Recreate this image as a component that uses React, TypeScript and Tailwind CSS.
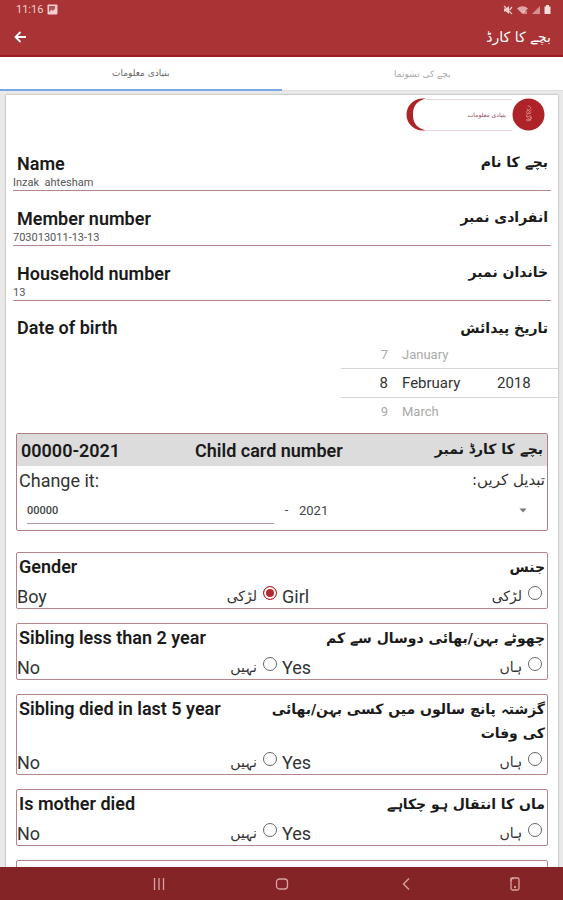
import { useState } from 'react';

const URDU = "font-['DejaVu_Sans',sans-serif]";

function StatusBar() {
  return (
    <div className="flex h-[19px] items-center justify-between pr-3 pl-4 text-[#f3cfcf]">
      <div className="flex items-center gap-1">
        <span className="text-[11px] leading-4">11:16</span>
        <svg width="11" height="11" viewBox="0 0 11 11" aria-hidden="true">
          <rect x="0.5" y="0.5" width="10" height="10" rx="1" fill="currentColor" />
          <path d="M2 8.5 4.5 5.5 6 7l2-2.5V2H2z" fill="#a93335" opacity="0.8" />
        </svg>
      </div>
      <div className="flex items-center gap-1">
        <svg width="10" height="10" viewBox="0 0 10 10" aria-hidden="true">
          <path d="M1 3.5h2L6 1v8L3 6.5H1z" fill="currentColor" />
          <path d="M1 1l8 8M9 2 6.500 5" stroke="currentColor" strokeWidth="1.2" />
        </svg>
        <svg width="11" height="10" viewBox="0 0 11 10" aria-hidden="true">
          <path d="M0 3.500a8 8 0 0 1 11 0L5.500 9z" fill="currentColor" opacity="0.75" />
          <path d="M7 6v3M9 6v3" stroke="#f7dede" />
        </svg>
        <svg width="8" height="9" viewBox="0 0 8 9" aria-hidden="true">
          <path d="M0 9 8 1v8z" fill="currentColor" opacity="0.6" />
        </svg>
        <svg width="7" height="9" viewBox="0 0 7 9" aria-hidden="true">
          <path d="M2 0h3v1.500h1.500V9h-6V1.500H2z" fill="#f7dede" />
        </svg>
      </div>
    </div>
  );
}

function AppBar() {
  return (
    <div className="flex h-9 items-center justify-between pr-3 pl-3">
      <button type="button" aria-label="Back" className="p-0.5 text-white">
        <svg width="12" height="12" viewBox="0 0 12 12" fill="none" stroke="currentColor" strokeWidth="1.800">
          <path d="M12 6H1.500M6.500 1l-5 5 5 5" />
        </svg>
      </button>
      <h1 dir="rtl" className={`${URDU} text-[14px] leading-6 text-white`}>بچے کا کارڈ</h1>
    </div>
  );
}

function Tabs() {
  return (
    <div role="tablist" className={`${URDU} flex h-[34px] shrink-0 bg-white text-[9px]`}>
      <button type="button" role="tab" aria-selected="true" dir="rtl"
        className="flex-1 border-b-2 border-[#78a9e0] pt-0.5 text-[#666]">
        بنیادی معلومات
      </button>
      <button type="button" role="tab" aria-selected="false" dir="rtl"
        className="flex-1 border-b border-[#ddd] pt-0.5 text-[#aaa]">
        بچے کی نشونما
      </button>
    </div>
  );
}

function SectionBadge() {
  return (
    <div className="mr-[13px] ml-auto flex h-[33px] w-[139px] items-center justify-end">
      <svg className="h-[33px] w-5 shrink-0" viewBox="0 0 20 33" aria-hidden="true">
        <path d="M20 0.500h-3.500a16 16 0 0 0 0 32H20C9 30 7 23 7 16.500S9 3 20 0.500z" fill="#ad2327" />
      </svg>
      <div className="flex h-8 flex-1 items-center justify-end border-y border-[#ecd3d4] pr-1.5">
        <span dir="rtl" className={`${URDU} text-[6px] text-[#8f4b58]`}>بنیادی معلومات</span>
      </div>
      <svg className="size-[33px] shrink-0" viewBox="0 0 33 33" fill="none" aria-hidden="true">
        <circle cx="16.500" cy="16.500" r="16" fill="#ad2327" />
        <g stroke="#d98585" strokeWidth="0.900" strokeLinecap="round">
          <path d="M16 8c2 0 3 1 2.500 2.500S15 12 14.500 14s3 2 4.500 1M19.500 12c-1 2-5 3-5 5s4 1 4.500 3-3 2-4.500 1.500M17.500 17c1.500 1 2.500 2.500 1.500 4s-3 2.500-4.500 1.500M15 11l3 3M14.500 18.500l4 4" />
        </g>
      </svg>
    </div>
  );
}

function Field({ id, label, urdu, defaultValue }: { id: string; label: string; urdu: string; defaultValue: string }) {
  return (
    <div className="px-[7px] pt-4">
      <div className="flex h-6 items-center justify-between pr-[3px] pb-0.5 pl-1">
        <label htmlFor={id} className="text-[18px] font-semibold">{label}</label>
        <span dir="rtl" className={`${URDU} pb-0.5 text-[14px] font-bold`}>{urdu}</span>
      </div>
      <input id={id} defaultValue={defaultValue}
        className="block h-[15px] w-full border-b border-[#b5858b] text-[11px] text-[#555] outline-none" />
    </div>
  );
}

function DatePicker() {
  const row = 'grid h-7 grid-cols-[47px_1fr_61px] items-center gap-[14px]';
  return (
    <div role="group" aria-labelledby="dob" className="ml-auto w-[217px]">
      <div className={`${row} pt-0.5 text-[13px] text-[#aaa]`}>
        <button type="button" className="text-right">7</button>
        <button type="button" className="text-left">January</button>
      </div>
      <div className="grid h-[30px] grid-cols-[47px_1fr_61px] items-center gap-[14px] border-y border-[#d6d6d6] text-[15px] text-[#333]">
        <span className="text-right">8</span>
        <span>February</span>
        <span>2018</span>
      </div>
      <div className={`${row} text-[13px] text-[#aaa]`}>
        <button type="button" className="text-right">9</button>
        <button type="button" className="text-left">March</button>
      </div>
    </div>
  );
}

function CardNumber() {
  return (
    <section className="mx-[10px] mt-[7px] rounded-xs border border-[#b07f84]">
      <div className="grid h-8 grid-cols-3 items-center bg-[#dcdcdc] px-1 text-[18px] font-semibold">
        <span>00000-2021</span>
        <h2 className="whitespace-nowrap">Child card number</h2>
        <span dir="rtl" className={`${URDU} pb-0.5 text-[14px] font-bold`}>بچے کا کارڈ نمبر</span>
      </div>
      <div className="flex h-7 items-center justify-between px-0.5 text-[#333]">
        <label htmlFor="cardNumber" className="text-[18px]">Change it:</label>
        <span dir="rtl" className={`${URDU} text-[15px]`}>تبدیل کریں:</span>
      </div>
      <div className="flex h-9 items-start pt-1 pr-4 pl-[10px] text-[#444]">
        <input id="cardNumber" defaultValue="00000"
          className="h-[26px] w-[247px] border-b border-[#b9999c] text-[11px] font-medium outline-none" />
        <span className="w-[25px] pt-0.5 text-center text-[13px]">-</span>
        <div className="relative flex-1">
          <select aria-label="Year" defaultValue="2021" className="h-[26px] w-full appearance-none text-[13px] outline-none">
            <option>2021</option>
            <option>2020</option>
            <option>2019</option>
          </select>
          <svg className="pointer-events-none absolute top-[10px] right-1" width="8" height="5" viewBox="0 0 8 5" aria-hidden="true">
            <path d="M0.500 0.500h7L4 4.500z" fill="#777" />
          </svg>
        </div>
      </div>
    </section>
  );
}

type Option = { label: string; urdu: string };
type Question = { id: string; label: string; urdu: string; options: Option[]; selected?: number };

const YES_NO: Option[] = [
  { label: 'No', urdu: 'نہیں' },
  { label: 'Yes', urdu: 'ہاں' },
];

const QUESTIONS: Question[] = [
  {
    id: 'gender',
    label: 'Gender',
    urdu: 'جنس',
    options: [
      { label: 'Boy', urdu: 'لڑکی' },
      { label: 'Girl', urdu: 'لڑکی' },
    ],
    selected: 0,
  },
  { id: 'siblingAge', label: 'Sibling less than 2 year', urdu: 'چھوٹے بہن/بھائی دوسال سے کم', options: YES_NO },
  { id: 'siblingDied', label: 'Sibling died in last 5 year', urdu: 'گزشتہ پانچ سالوں میں کسی بہن/بھائی کی وفات', options: YES_NO },
  { id: 'motherDied', label: 'Is mother died', urdu: 'ماں کا انتقال ہو چکاہے', options: YES_NO },
];

function QuestionCard({ question }: { question: Question }) {
  const [selected, setSelected] = useState(question.selected ?? -1);

  return (
    <section role="radiogroup" aria-labelledby={question.id} className="rounded-xs border border-[#b5858b] pt-0.5">
      <div className="flex justify-between px-0.5 leading-6">
        <h2 id={question.id} className="text-[18px] font-semibold">{question.label}</h2>
        <p dir="rtl" className={`${URDU} max-w-[285px] text-[14px] font-bold`}>{question.urdu}</p>
      </div>
      <div className="grid h-[29px] grid-cols-2">
        {question.options.map((o, i) => (
          <label key={o.label} className="flex items-center pt-1 pr-[5px] text-[#333]">
            <span className="text-[18px]">{o.label}</span>
            <span dir="rtl" className={`${URDU} ml-auto text-[14px]`}>{o.urdu}</span>
            <input type="radio" name={`${question.id}-answer`} checked={selected === i} onChange={() => setSelected(i)}
              className="mb-2 ml-1.5 size-[14px] appearance-none rounded-full border border-[#666] checked:border-[#b5282c] checked:bg-[#b5282c] checked:shadow-[inset_0_0_0_2px_white]" />
          </label>
        ))}
      </div>
    </section>
  );
}

function NavBar() {
  return (
    <nav className="flex h-[33px] shrink-0 items-center bg-[#842427] pt-px pl-[17.25%] text-[#d9a3a3]">
      <button type="button" aria-label="Recent apps" className="flex w-[26.5%] justify-center">
        <svg width="14" height="14" viewBox="0 0 14 14" stroke="currentColor" strokeWidth="1.300">
          <path d="M2.500 1v12M7 1v12M11.500 1v12" />
        </svg>
      </button>
      <button type="button" aria-label="Home" className="flex w-[26.5%] justify-center">
        <svg width="14" height="14" viewBox="0 0 14 14" fill="none" stroke="currentColor" strokeWidth="1.300">
          <rect x="1.500" y="2" width="11" height="10" rx="3" />
        </svg>
      </button>
      <button type="button" aria-label="Back" className="flex w-[26.5%] justify-center">
        <svg width="14" height="14" viewBox="0 0 14 14" fill="none" stroke="currentColor" strokeWidth="1.400">
          <path d="M10 1.500 4.500 7l5.500 5.500" />
        </svg>
      </button>
      <button type="button" aria-label="Rotate screen" className="flex flex-1 justify-center">
        <svg width="12" height="14" viewBox="0 0 12 14" fill="none" stroke="currentColor" strokeWidth="1.300">
          <rect x="2" y="1" width="8" height="12" rx="1.500" />
          <path d="M2 4V1.500h3M5 10h2M6 9v2" />
        </svg>
      </button>
    </nav>
  );
}

export default function App() {
  return (
    <div className="flex h-screen flex-col bg-[#e9e9e9] font-[Roboto,sans-serif] text-[#1a1a1a]">
      <header className="shrink-0 border-b-2 border-[#9d1b1f] bg-[#a93335]">
        <StatusBar />
        <AppBar />
      </header>
      <Tabs />

      <main className="min-h-0 flex-1 overflow-hidden pt-1 pr-[5px] pl-1.5">
        <div className="min-h-full bg-white pt-[3px] shadow-[0_0_2px_#999]">
          <SectionBadge />
          <div className="mt-[5px]">
            <Field id="name" label="Name" urdu="بچے کا نام" defaultValue="Inzak  ahtesham" />
            <Field id="member" label="Member number" urdu="انفرادی نمبر" defaultValue="703013011-13-13" />
            <Field id="household" label="Household number" urdu="خاندان نمبر" defaultValue="13" />
          </div>

          {/* Date of birth */}
          <div className="flex items-center justify-between pt-[15px] pr-[10px] pl-[11px]">
            <h2 id="dob" className="text-[18px] leading-6 font-semibold">Date of birth</h2>
            <span dir="rtl" className={`${URDU} text-[14px] leading-6 font-bold`}>تاریخ پیدائش</span>
          </div>
          <DatePicker />

          <CardNumber />

          <div className="mx-[10px] mt-[21px] flex flex-col gap-[14px]">
            {QUESTIONS.map((q) => (
              <QuestionCard key={q.id} question={q} />
            ))}
            <div className="h-14 rounded-xs border border-[#b5858b]" />
          </div>
        </div>
      </main>

      <NavBar />
    </div>
  );
}
